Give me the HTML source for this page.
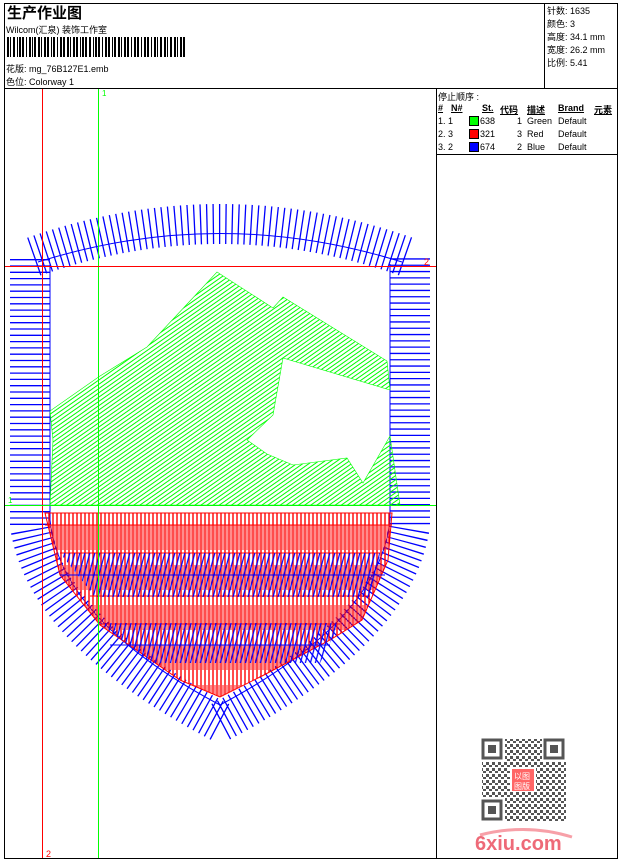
<!DOCTYPE html>
<html><head><meta charset="utf-8"><style>
*{margin:0;padding:0}
body{width:620px;height:860px;background:#fff;position:relative;overflow:hidden;font-family:"Liberation Sans","Noto Sans CJK SC",sans-serif;font-size:9px;color:#000}
.a{position:absolute;white-space:nowrap}
.ln{position:absolute;background:#000}
</style></head><body>
<div class="ln" style="left:4px;top:3px;width:614px;height:1px"></div>
<div class="ln" style="left:4px;top:858px;width:614px;height:1px"></div>
<div class="ln" style="left:4px;top:3px;width:1px;height:856px"></div>
<div class="ln" style="left:617px;top:3px;width:1px;height:856px"></div>
<div class="ln" style="left:4px;top:88px;width:614px;height:1px"></div>
<div class="ln" style="left:544px;top:3px;width:1px;height:86px"></div>
<div class="ln" style="left:436px;top:88px;width:1px;height:771px"></div>
<div class="ln" style="left:436px;top:154px;width:182px;height:1px"></div>

<div class="a" style="left:7px;top:2px;font-size:15px;font-weight:bold">生产作业图</div>
<div class="a" style="left:6px;top:23px">Wilcom(汇泉) 装饰工作室</div>
<svg class="a" style="left:7px;top:37px" width="178" height="20">
<g fill="#000">
<rect x="0" y="0" width="2" height="20"/><rect x="3" y="0" width="1" height="20"/><rect x="6" y="0" width="2" height="20"/><rect x="10" y="0" width="1" height="20"/><rect x="12" y="0" width="2" height="20"/><rect x="15" y="0" width="2" height="20"/><rect x="19" y="0" width="1" height="20"/><rect x="22" y="0" width="2" height="20"/><rect x="25" y="0" width="1" height="20"/><rect x="27" y="0" width="2" height="20"/><rect x="31" y="0" width="2" height="20"/><rect x="34" y="0" width="1" height="20"/><rect x="37" y="0" width="2" height="20"/><rect x="40" y="0" width="2" height="20"/><rect x="44" y="0" width="1" height="20"/><rect x="46" y="0" width="2" height="20"/><rect x="50" y="0" width="1" height="20"/><rect x="53" y="0" width="2" height="20"/><rect x="56" y="0" width="2" height="20"/><rect x="60" y="0" width="2" height="20"/><rect x="63" y="0" width="1" height="20"/><rect x="66" y="0" width="2" height="20"/><rect x="69" y="0" width="2" height="20"/><rect x="73" y="0" width="1" height="20"/><rect x="75" y="0" width="2" height="20"/><rect x="78" y="0" width="2" height="20"/><rect x="82" y="0" width="2" height="20"/><rect x="86" y="0" width="1" height="20"/><rect x="88" y="0" width="2" height="20"/><rect x="91" y="0" width="2" height="20"/><rect x="95" y="0" width="1" height="20"/><rect x="98" y="0" width="2" height="20"/><rect x="101" y="0" width="2" height="20"/><rect x="105" y="0" width="1" height="20"/><rect x="107" y="0" width="2" height="20"/><rect x="111" y="0" width="2" height="20"/><rect x="114" y="0" width="1" height="20"/><rect x="117" y="0" width="2" height="20"/><rect x="120" y="0" width="2" height="20"/><rect x="124" y="0" width="1" height="20"/><rect x="127" y="0" width="2" height="20"/><rect x="130" y="0" width="2" height="20"/><rect x="134" y="0" width="1" height="20"/><rect x="137" y="0" width="2" height="20"/><rect x="140" y="0" width="2" height="20"/><rect x="144" y="0" width="1" height="20"/><rect x="147" y="0" width="2" height="20"/><rect x="150" y="0" width="1" height="20"/><rect x="153" y="0" width="2" height="20"/><rect x="157" y="0" width="2" height="20"/><rect x="160" y="0" width="1" height="20"/><rect x="163" y="0" width="2" height="20"/><rect x="167" y="0" width="2" height="20"/><rect x="170" y="0" width="1" height="20"/><rect x="173" y="0" width="2" height="20"/><rect x="176" y="0" width="2" height="20"/>
</g></svg>
<div class="a" style="left:6px;top:62px">花版: mg_76B127E1.emb</div>
<div class="a" style="left:6px;top:75px">色位: Colorway 1</div>

<div class="a" style="left:547px;top:5px;line-height:13px">针数: 1635<br>颜色: 3<br>高度: 34.1 mm<br>宽度: 26.2 mm<br>比例: 5.41</div>

<div class="a" style="left:438px;top:90px">停止顺序 :</div>
<div class="a" style="left:438px;top:103px;font-weight:bold;text-decoration:underline">#</div>
<div class="a" style="left:451px;top:103px;font-weight:bold;text-decoration:underline">N#</div>
<div class="a" style="left:482px;top:103px;font-weight:bold;text-decoration:underline">St.</div>
<div class="a" style="left:500px;top:103px;font-weight:bold;text-decoration:underline">代码</div>
<div class="a" style="left:527px;top:103px;font-weight:bold;text-decoration:underline">描述</div>
<div class="a" style="left:558px;top:103px;font-weight:bold;text-decoration:underline">Brand</div>
<div class="a" style="left:594px;top:103px;font-weight:bold;text-decoration:underline">元素</div>
<div class="a" style="left:438px;top:116px">1. 1</div><div class="a" style="left:469px;top:116px;width:8px;height:8px;background:#0f0;border:1px solid #000"></div><div class="a" style="left:480px;top:116px">638</div><div class="a" style="left:517px;top:116px">1</div><div class="a" style="left:527px;top:116px">Green</div><div class="a" style="left:558px;top:116px">Default</div>
<div class="a" style="left:438px;top:129px">2. 3</div><div class="a" style="left:469px;top:129px;width:8px;height:8px;background:#f00;border:1px solid #000"></div><div class="a" style="left:480px;top:129px">321</div><div class="a" style="left:517px;top:129px">3</div><div class="a" style="left:527px;top:129px">Red</div><div class="a" style="left:558px;top:129px">Default</div>
<div class="a" style="left:438px;top:142px">3. 2</div><div class="a" style="left:469px;top:142px;width:8px;height:8px;background:#00f;border:1px solid #000"></div><div class="a" style="left:480px;top:142px">674</div><div class="a" style="left:517px;top:142px">2</div><div class="a" style="left:527px;top:142px">Blue</div><div class="a" style="left:558px;top:142px">Default</div>

<svg class="a" style="left:0;top:0" width="436" height="860">
<defs>
<pattern id="gh" width="3.5" height="3.5" patternUnits="userSpaceOnUse" patternTransform="rotate(-35)"><line x1="0" y1="0.5" x2="3.5" y2="0.5" stroke="#0f0" stroke-width="1"/></pattern>
<pattern id="rv" width="4" height="40" patternUnits="userSpaceOnUse"><line x1="1" y1="0" x2="1" y2="40" stroke="#f00" stroke-width="1.4"/><line x1="3" y1="5" x2="3" y2="30" stroke="#f00" stroke-width="0.9"/></pattern>
<pattern id="bv" width="5" height="10" patternUnits="userSpaceOnUse" patternTransform="skewX(-15)"><line x1="3" y1="0" x2="3" y2="10" stroke="#00f" stroke-width="1.3"/></pattern>
</defs>
<!-- blue satin border -->
<path d="M220,722 Q45,630 30,525 L30,258 Q220,190 410,258 L410,525 Q395,630 220,722" fill="none" stroke="#00f" stroke-width="40" stroke-dasharray="1.3 5"/>
<path d="M38,262 Q220,205 402,262" fill="none" stroke="#00f" stroke-width="1"/>
<path d="M50,264 L50,520 Q60,620 220,705 Q380,620 390,520 L390,264" fill="none" stroke="#00f" stroke-width="1"/>
<!-- green mountains -->
<polygon points="50,411 100,376 147,347 217,272 273,308 283,297 387,361 390,390 283,358 273,415 247,440 267,454 293,465 347,458 363,483 390,436 400,505 50,505 53,440" fill="url(#gh)" stroke="#0f0" stroke-width="0.6"/>
<!-- red fill -->
<polygon points="45,513 392,513 388,560 362,620 330,640 262,676 220,697 180,680 100,625 60,575" fill="url(#rv)" stroke="#f00" stroke-width="1"/>
<line x1="45" y1="525" x2="392" y2="525" stroke="#f00"/>
<line x1="60" y1="553" x2="380" y2="553" stroke="#f00"/>
<line x1="90" y1="596" x2="370" y2="596" stroke="#f00"/>
<line x1="100" y1="624" x2="340" y2="624" stroke="#f00"/>
<polygon points="60,553 380,553 372,597 95,597" fill="url(#bv)"/>
<polygon points="100,623 340,623 320,663 150,663" fill="url(#bv)"/>
<line x1="60" y1="575" x2="385" y2="575" stroke="#00f"/>
<line x1="110" y1="645" x2="330" y2="645" stroke="#00f"/>
<!-- guide lines -->
<line x1="42.5" y1="89" x2="42.5" y2="858" stroke="#f00"/>
<line x1="98.5" y1="89" x2="98.5" y2="858" stroke="#0f0"/>
<line x1="5" y1="266.5" x2="436" y2="266.5" stroke="#f00"/>
<line x1="5" y1="505.5" x2="436" y2="505.5" stroke="#0f0"/>
<text x="102" y="96" fill="#0f0" font-size="8" font-family="Liberation Sans">1</text>
<text x="424" y="265" fill="#f00" font-size="9" font-family="Liberation Sans">2</text>
<text x="8" y="503" fill="#0f0" font-size="8" font-family="Liberation Sans">1</text>
<text x="46" y="857" fill="#f00" font-size="9" font-family="Liberation Sans">2</text>
</svg>

<svg class="a" style="left:480px;top:738px" width="90" height="86">
<defs><pattern id="qr" width="6" height="6" patternUnits="userSpaceOnUse"><rect x="0" y="0" width="3" height="3" fill="#555"/><rect x="3" y="3" width="3" height="2" fill="#555"/></pattern></defs>
<rect x="2" y="1" width="84" height="83" fill="url(#qr)"/>
<g fill="#fff"><rect x="1" y="0" width="24" height="24"/><rect x="62" y="0" width="25" height="24"/><rect x="1" y="60" width="24" height="25"/></g>
<g fill="none" stroke="#555" stroke-width="3"><rect x="3" y="2" width="18" height="18"/><rect x="65" y="2" width="18" height="18"/><rect x="3" y="63" width="18" height="18"/></g>
<g fill="#555"><rect x="8" y="7" width="8" height="8"/><rect x="70" y="7" width="8" height="8"/><rect x="8" y="68" width="8" height="8"/></g>
<rect x="30" y="30" width="26" height="24" fill="#fff"/>
<rect x="32" y="31" width="22" height="22" fill="#f66"/>
<text x="34" y="41" fill="#fff" font-size="8" font-family="Noto Sans CJK SC">以图</text>
<text x="34" y="51" fill="#fff" font-size="8" font-family="Noto Sans CJK SC">图版</text>
</svg>
<svg class="a" style="left:472px;top:825px" width="105" height="30">
<path d="M8,10 Q55,-2 100,12" fill="none" stroke="#f7a0a8" stroke-width="3"/>
<text x="3" y="25" fill="#ee6a78" font-size="20" font-weight="bold" font-family="Liberation Sans">6xiu.com</text>
</svg>
</body></html>
